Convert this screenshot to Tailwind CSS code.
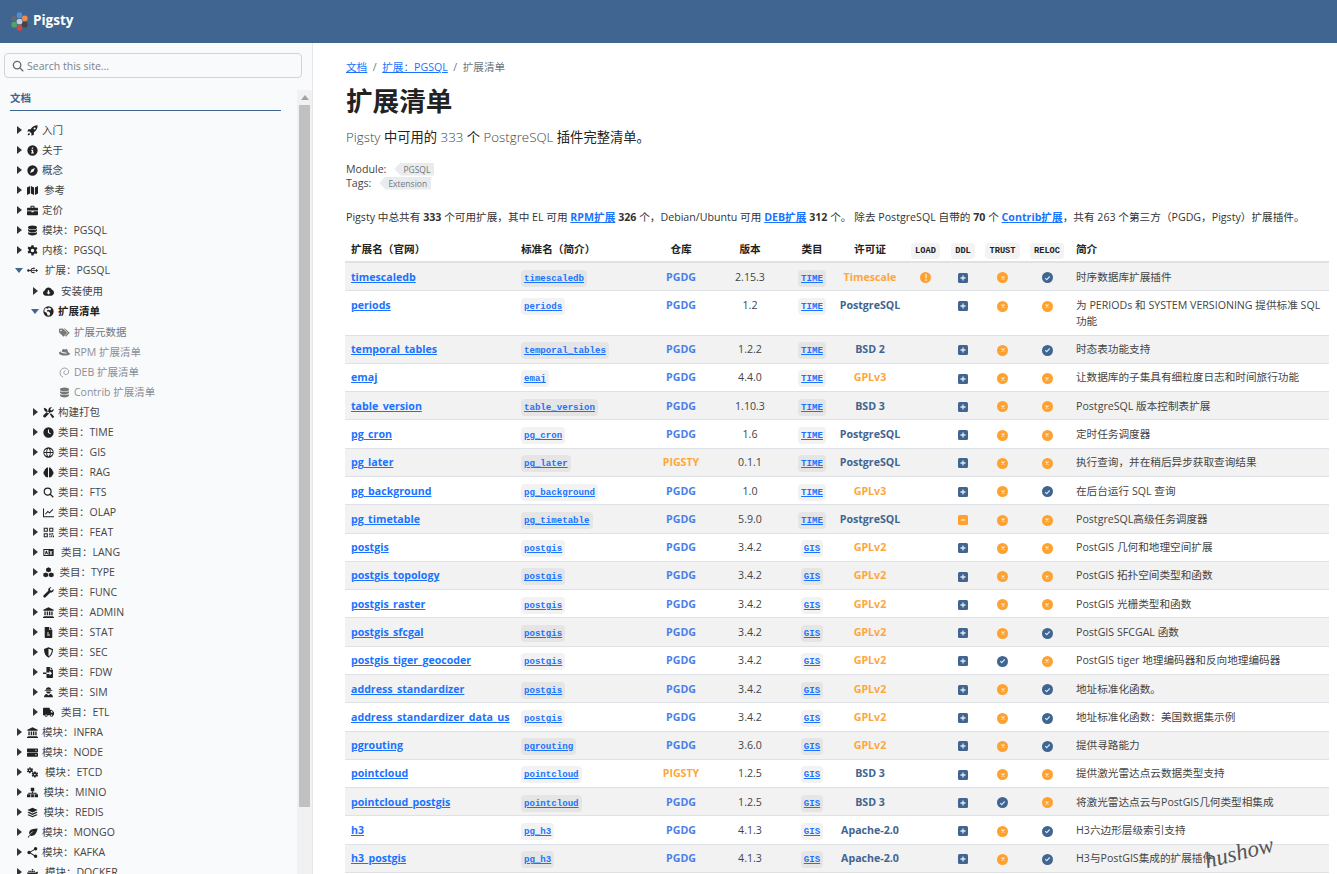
<!DOCTYPE html>
<html lang="zh">
<head>
  <meta charset="UTF-8" />
  <title>扩展清单 | Pigsty</title>
  <script src="https://cdn.jsdelivr.net/npm/@tailwindcss/browser@4"></script>
</head>
<body class="h-screen overflow-hidden bg-white text-[10.64px] leading-[16px] text-[#222] font-['Open_Sans','Noto_Sans_CJK_SC',sans-serif]">
  <header class="h-[43px] bg-[#3f6590] flex items-center pl-[11px]">
    <svg width="17" height="19" viewBox="0 0 16 18" class="mr-[5px]">
      <circle cx="8" cy="3" r="2.700" fill="#4a90d9"/><circle cx="13" cy="6" r="2.700" fill="#f08a4b"/><circle cx="13" cy="12" r="2.700" fill="#444"/>
      <circle cx="8" cy="15" r="2.700" fill="#d64541"/><circle cx="3" cy="12" r="2.700" fill="#4fa36b"/><circle cx="3" cy="6" r="2.700" fill="#5b6b7a"/><circle cx="8" cy="9" r="2.700" fill="#c9ccd0"/>
    </svg>
    <span class="text-white font-bold text-[13.500px] -mt-[3px]">Pigsty</span>
  </header>

  <div class="flex h-[831px]">
    <aside class="w-[313px] shrink-0 bg-[#f9fafc] border-r border-[#e4e6ea] flex flex-col overflow-hidden text-[10.500px]">
      <div class="pt-[10px] pl-[4px] pr-[10px] pb-[12px]">
        <div class="h-[25px] border border-[#ced4da] rounded-[4px] flex items-center pl-[7px] gap-[3px] text-[10.500px] text-[#7b8188]">
          <svg width="12" height="12" viewBox="0 0 16 16" fill="none" stroke="#5f666d" stroke-width="1.700"><circle cx="6.800" cy="6.800" r="5"/><path d="M10.500 10.500L15 15"/></svg>
          <span>Search this site...</span>
        </div>
      </div>
      <div class="flex flex-1 min-h-0">
        <nav class="w-[297px] overflow-hidden pl-[10px] pr-[16px]">
          <div class="h-[21px] border-b border-[#3f6590] font-bold text-[#3f6590] leading-[16px]">文档</div>
          <ul id="tree" class="pt-[9px] -ml-[10px] -mr-[16px] text-[#444]"></ul>
        </nav>
        <div class="w-[15px] bg-[#f1f1f1] flex flex-col items-center">
          <div class="mt-[5px] mb-[5px] w-0 h-0 border-x-[4px] border-x-transparent border-b-[5px] border-b-[#a3a3a3]"></div>
          <div class="w-[11px] h-[702px] bg-[#c1c1c1]"></div>
        </div>
      </div>
    </aside>

    <main class="flex-1 min-w-0 pl-[33px] pr-[7px] pt-[16px] overflow-hidden">
      <div class="text-[10.640px] text-[#6c757d] h-[16px] flex gap-[5.500px]">
        <a class="text-[#1a73ff] underline">文档</a><span>/</span><a class="text-[#1a73ff] underline">扩展：PGSQL</a><span>/</span><span>扩展清单</span>
      </div>
      <h1 class="mt-[8px] text-[26.600px] leading-[36px] font-bold text-[#222]">扩展清单</h1>
      <p class="mt-[8px] text-[13.300px] leading-[20px] font-light text-[#444]">Pigsty <span class="font-normal text-[#222]">中可用的</span> 333 <span class="font-normal text-[#222]">个</span> PostgreSQL <span class="font-normal text-[#222]">插件完整清单。</span></p>
      <div class="mt-[15px] leading-[14px] text-[#444]">
        <div class="flex items-center h-[14px]">Module:<span class="ml-[8px] h-[13px] pl-[9px] pr-[4px] bg-[#e9ecef] text-[#777] text-[8.500px] leading-[13px] [clip-path:polygon(6px_0,100%_0,100%_100%,6px_100%,0_50%)]">PGSQL</span></div>
        <div class="flex items-center h-[14px]">Tags:<span class="ml-[8px] h-[13px] pl-[9px] pr-[4px] bg-[#e9ecef] text-[#777] text-[8.500px] leading-[13px] [clip-path:polygon(6px_0,100%_0,100%_100%,6px_100%,0_50%)]">Extension</span></div>
      </div>
      <p class="mt-[19px] text-[#333] tracking-[0.01px]">Pigsty 中总共有 <b>333</b> 个可用扩展，其中 EL 可用 <a class="font-bold text-[#1a73ff] underline">RPM扩展</a> <b>326</b> 个，Debian/Ubuntu 可用 <a class="font-bold text-[#1a73ff] underline">DEB扩展</a> <b>312</b> 个。 除去 PostgreSQL 自带的 <b>70</b> 个 <a class="font-bold text-[#1a73ff] underline">Contrib扩展</a>，共有 263 个第三方（PGDG，Pigsty）扩展插件。</p>

      <table class="mt-[11px] -ml-[1px] table-fixed w-[984px] border-collapse">
        <colgroup>
          <col class="w-[170px]"/><col class="w-[137px]"/><col class="w-[58px]"/><col class="w-[80px]"/><col class="w-[44px]"/><col class="w-[72px]"/><col class="w-[39px]"/><col class="w-[36px]"/><col class="w-[43px]"/><col class="w-[46px]"/><col class="w-[259px]"/>
        </colgroup>
        <thead>
          <tr class="border-b-2 border-[#dee2e6] text-[#222] font-bold">
            <th class="px-[6px] pt-[5px] pb-[4px] text-left">扩展名（官网）</th>
            <th class="px-[6px] pt-[5px] pb-[4px] text-left">标准名（简介）</th>
            <th class="pt-[5px] pb-[4px] text-center">仓库</th>
            <th class="pt-[5px] pb-[4px] text-center">版本</th>
            <th class="pt-[5px] pb-[4px] text-center">类目</th>
            <th class="pt-[5px] pb-[4px] text-center">许可证</th>
            <th class="pt-[5px] pb-[4px] text-center"><code class="px-[4px] py-[3px] leading-none rounded-[4px] bg-[#f3f3f3] font-['Liberation_Mono',monospace] text-[8.700px]">LOAD</code></th>
            <th class="pt-[5px] pb-[4px] text-center"><code class="px-[4px] py-[3px] leading-none rounded-[4px] bg-[#f3f3f3] font-['Liberation_Mono',monospace] text-[8.700px]">DDL</code></th>
            <th class="pt-[5px] pb-[4px] text-center"><code class="px-[4px] py-[3px] leading-none rounded-[4px] bg-[#f3f3f3] font-['Liberation_Mono',monospace] text-[8.700px]">TRUST</code></th>
            <th class="pt-[5px] pb-[4px] text-center"><code class="px-[4px] py-[3px] leading-none rounded-[4px] bg-[#f3f3f3] font-['Liberation_Mono',monospace] text-[8.700px]">RELOC</code></th>
            <th class="px-[6px] pt-[5px] pb-[4px] text-left">简介</th>
          </tr>
        </thead>
        <tbody id="rows"></tbody>
      </table>
    </main>
  </div>

  <!-- watermark sits on top of the table -->
  <div class="absolute left-[1204px] top-[838px] -rotate-[14deg] text-[23px] leading-[30px] italic font-light text-[#555] font-['Liberation_Serif',serif]">hushow</div>

  <script>
    const icons = {
      rocket: '<path fill-rule="evenodd" d="M15.500.5C11 .5 7.500 2.500 5.300 6H2L.5 9.500h3.300l2.700 2.700v3.300l3.500-1.500v-3.300C13.500 8.500 15.500 5 15.500.5zM11 3.500a1.500 1.500 0 1 1 0 3 1.500 1.500 0 0 1 0-3z"/><path d="M3 11.500c-1.300.5-2 2-2 3.500 1.500 0 3-.7 3.500-2z"/>',
      info: '<path fill-rule="evenodd" d="M8 .5a7.500 7.500 0 1 1 0 15 7.500 7.500 0 0 1 0-15zM7 3.500v2h2v-2zM6 7v1.500h1v2.500H6v1.500h4V11H9V7z"/>',
      compass: '<path fill-rule="evenodd" d="M8 .5a7.500 7.500 0 1 1 0 15 7.500 7.500 0 0 1 0-15zM11.500 4.500L6.500 6.500 4.500 11.500l5-2z"/>',
      map: '<path d="M0 3.500L4.500 1.500V12.500L0 14.500zM5.700 1.500L10.200 3.500V14.500L5.700 12.500zM11.500 3.500L16 1.500V12.500L11.500 14.500z"/>',
      briefcase: '<path fill-rule="evenodd" d="M5 4V2.500C5 1.700 5.700 1 6.500 1h3c.8 0 1.500.7 1.500 1.500V4h3.500C15.300 4 16 4.700 16 5.500V8H0V5.500C0 4.700.7 4 1.500 4zM6.500 2.500V4h3V2.500zM0 9.200h6.500v1.300h3V9.200H16v4.300c0 .8-.7 1.500-1.500 1.500h-13C.7 15 0 14.300 0 13.500z"/>',
      database: '<ellipse cx="8" cy="3.500" rx="6.500" ry="2.800"/><path d="M1.500 5.700C3 7.500 13 7.500 14.500 5.700V8c0 1.500-2.900 2.800-6.500 2.800S1.500 9.500 1.500 8zM1.500 10.200C3 12 13 12 14.500 10.200v2.300c0 1.500-2.900 2.800-6.500 2.800s-6.500-1.300-6.500-2.800z"/>',
      gear: '<path fill-rule="evenodd" d="M6.500.5h3l.5 2.300 1.500.8 2.200-.8 1.500 2.600-1.700 1.600v1.800l1.700 1.600-1.500 2.600-2.200-.8-1.500.8-.5 2.300h-3L6 12.500l-1.500-.8-2.200.8L.8 9.900l1.700-1.600V6.500L.8 4.900l1.500-2.600 2.200.8L6 2.300zM8 5.500a2.500 2.500 0 1 0 0 5 2.500 2.500 0 0 0 0-5z"/>',
      usb: '<circle cx="2" cy="8" r="1.800"/><path d="M2 7.400h12v1.200H2z"/><path d="M13 5.500L16 8l-3 2.500z"/><path d="M4.500 8L7 4.500h2.500v1.200H7.700L5.800 8zM4.500 8L7 11.500h2v-1.200H7.700L5.800 8z"/><rect x="9" y="3.800" width="2.200" height="2.200"/><circle cx="10" cy="11" r="1.200"/>',
      cloud: '<path fill-rule="evenodd" d="M4 14C1.800 14 0 12.300 0 10.200 0 8.500 1 7.100 2.600 6.600 3 4 5.200 2 8 2c2.400 0 4.400 1.500 5.100 3.600C14.800 6.200 16 7.800 16 9.800 16 12.100 14.100 14 11.700 14zM7 6v3.500H5l3 3 3-3H9V6z"/>',
      globeAfrica: '<path fill-rule="evenodd" d="M8 .5a7.500 7.500 0 1 1 0 15 7.500 7.500 0 0 1 0-15zM4 3C2.500 4.200 1.800 6 2 8c1 1 2.500 1 3.500 2l1 3.500c1 .5 2 .5 3 .2l1-3-2-2.700H6L5.500 6.500 8 5.500l2.500 1L12 4c-1-1-2-1.500-3.500-1.700L7 4z"/>',
      tags: '<path fill-rule="evenodd" d="M0 2.500v5l6.500 6.500L12 8.500 5.500 2zM3 4a1.200 1.200 0 1 0 0 2.400A1.200 1.200 0 0 0 3 4z"/><path d="M7 2h1.500L15.500 8.500 10 14l-1.200-1.200 4-4.300z"/>',
      redhat: '<path d="M4 7c.5-2 1-4 2.500-4 1 0 1.200.5 2 .5S10 3 11 3c1.300 0 1.800 2 2.200 4.500C14.800 8 16 8.700 16 9.700c0 1.500-3 2.800-7.500 2.800C4 12.500 0 10.800 0 8.700 0 7.800.8 7 2.200 6.700 2 8 5 9.500 9 9.500c1.500 0 2.500-.3 2.500-.8C11.500 8 8 8 4 7z"/>',
      debian: '<path fill="none" stroke="currentColor" stroke-width="1" d="M6 14.500C3 13.500 1.500 11 1.500 8 1.500 4.500 4.500 1.500 8 1.500s6 2.500 6 5.500c0 2.500-2 4-4 4-1.800 0-3-1.300-3-2.800S8 5.500 9.500 5.500"/>',
      tools: '<path d="M1 2.500L2.500 1 6 3.500V5l3 3-1.500 1.500-3-3H3zM11.500.5c-2.300 0-4 2-3.500 4.300L1 11.500c-1 1-1 2.300-.2 3.200s2.200.8 3.200-.2l6.700-7c2.300.5 4.800-1.200 4.800-3.500 0-.5 0-1-.2-1.300L12.800 5 11 4.500 10.500 2.800 13 .7C12.500.5 12 .5 11.500.5z"/><path d="M10 10.500l1.500-1.500 4 4c.7.700.7 1.800 0 2.400s-1.700.6-2.400 0z"/>',
      clock: '<path fill-rule="evenodd" d="M8 .5a7.500 7.500 0 1 1 0 15 7.500 7.500 0 0 1 0-15zM7.200 3.500V8.400l3.300 2.300.9-1.200-2.700-1.900V3.500z"/>',
      globe: '<path fill-rule="evenodd" d="M8 .5a7.500 7.500 0 1 1 0 15 7.500 7.500 0 0 1 0-15zM1.800 7.300h3c0-1.700.3-3.200.8-4.400C3.500 3.600 2.100 5.300 1.800 7.300zM6 7.300h4c-.1-2.500-1-4.500-2-5-1 .5-1.900 2.500-2 5zM11.200 7.300h3c-.3-2-1.700-3.700-3.800-4.400.5 1.200.8 2.700.8 4.400zM1.800 8.700c.3 2 1.700 3.700 3.800 4.400-.5-1.200-.8-2.700-.8-4.400zM6 8.700c.1 2.500 1 4.500 2 5 1-.5 1.900-2.500 2-5zM11.200 8.700c0 1.700-.3 3.200-.8 4.400 2.100-.7 3.500-2.400 3.800-4.400z"/>',
      brain: '<path d="M7.300 1C5.500.5 4.500 1.500 4.200 2.700 2.700 3 2 4.300 2.300 5.500 1 6.300.5 7.500.8 8.700c-.2 1.300.5 2.300 1.500 2.800 0 1.500 1 2.500 2.200 2.700.5 1 1.700 1.300 2.800.8zM8.700 1c1.800-.5 2.800.5 3.100 1.700 1.500.3 2.200 1.600 1.900 2.800 1.300.8 1.800 2 1.500 3.200.2 1.300-.5 2.300-1.500 2.800 0 1.500-1 2.500-2.200 2.700-.5 1-1.700 1.300-2.800.8z"/>',
      search: '<path fill="none" stroke="currentColor" stroke-width="1.800" d="M6.800 1.800a5 5 0 1 0 0 10 5 5 0 0 0 0-10zM10.500 10.500L15 15"/>',
      chart: '<path d="M0 2h1.500v11.500H16V15H0z"/><path fill="none" stroke="currentColor" stroke-width="1.500" d="M3.500 10.500l3.500-4 2.500 2 5-5"/>',
      qr: '<path fill-rule="evenodd" d="M1 1h6v6H1zM2.500 2.500v3h3v-3zM9 1h6v6H9zM10.500 2.500v3h3v-3zM1 9h6v6H1zM2.500 10.500v3h3v-3z"/><path d="M9 9h2v3H9zM12 9h3v2h-3zM12 12h1.500v3H12zM9 13.500h2V15H9zM14.500 12.500H16V15h-1.500z"/>',
      lang: '<path fill-rule="evenodd" d="M.5 3h15v10H.5zM2 4.500v7h6v-7zM4.200 5.500h1.500L7.300 10.500H6l-.3-1H4.200l-.3 1H2.700zM9.500 6v1h1v3h-1v1h4v-1h-1V7h1V6z"/>',
      cubes: '<path d="M8 .5l3.500 1.500v4L8 7.500 4.500 6V2zM4 8l3.500 1.500v4L4 15 .5 13.500v-4zM12 8l3.500 1.500v4L12 15l-3.500-1.500v-4z"/>',
      wrench: '<path d="M11.500.5c-2.500 0-4.500 2.200-3.800 4.800L1 12c-.8.800-.8 2 0 2.800s2 .8 2.800 0l6.800-6.700c2.600.7 4.900-1.300 4.900-3.600 0-.5-.1-1-.3-1.500l-2.400 2.300-2.300-.6-.6-2.200L12.300.6C12 .5 11.800.5 11.500.5z"/>',
      bank: '<path d="M8 .5L15.500 4v1.500H.5V4zM2 6.500h2v5.500H2zM5.500 6.500h2v5.500h-2zM8.700 6.500h2v5.500h-2zM12 6.500h2v5.500h-2zM1 13h14v1.200H1zM0 14.700h16V16H0z"/>',
      file: '<path fill-rule="evenodd" d="M2.500 0H9v4.500h4.500v10c0 .8-.7 1.500-1.500 1.500H4c-.8 0-1.500-.7-1.500-1.500zM6 8v1.500h2.500V8zM6 11v1.500h4V11zM10 0l3.500 3.500H10z"/>',
      shield: '<path fill-rule="evenodd" d="M8 .5L14.500 3c0 5-1.500 10-6.500 12.500C3 13 1.500 8 1.500 3zM8 2.500v11c3.500-2 4.700-6 4.800-9.300z"/>',
      fileImport: '<path d="M5 0h5v4.500h4.500V14.500c0 .8-.7 1.500-1.500 1.500H6.500C5.700 16 5 15.300 5 14.500V10h4.500V12.500L13 9 9.500 5.500V8H5zM11 0l3.500 3.500H11zM0 8h5v2H0z"/>',
      user: '<path d="M8 .5c2.200 0 4 1.500 4 3.500H4C4 2 5.800.5 8 .5zM2.500 4.700h11v1.100h-11zM4.500 6.500h7C11.200 8.300 9.800 9.500 8 9.500S4.800 8.300 4.500 6.500zM1.500 15c0-2.500 1.500-4.500 4-4.800L8 12.500l2.500-2.300c2.500.3 4 2.300 4 4.800z"/>',
      truck: '<path fill-rule="evenodd" d="M0 2.500C0 1.700.7 1 1.500 1h7C9.300 1 10 1.700 10 2.500V4h2.500L16 7.500v4.500h-1.300a2.200 2.200 0 0 1-4.400 0H6.700a2.200 2.200 0 0 1-4.400 0H0zM11.500 5.500V8H14.500L12.500 5.500zM4.500 11a1 1 0 1 0 0 2 1 1 0 0 0 0-2zM12.500 11a1 1 0 1 0 0 2 1 1 0 0 0 0-2z"/>',
      server: '<path fill-rule="evenodd" d="M1 2h14c.6 0 1 .4 1 1v3.500c0 .6-.4 1-1 1H1c-.6 0-1-.4-1-1V3c0-.6.4-1 1-1zM1 8.500h14c.6 0 1 .4 1 1V13c0 .6-.4 1-1 1H1c-.6 0-1-.4-1-1V9.500c0-.6.4-1 1-1zM12 4v1.500h2V4zM12 10.500V12h2v-1.500z"/>',
      gears: '<path fill-rule="evenodd" d="M3 .5h2l.3 1.300 1.200.5 1.200-.6L9 3.100l-1 .9v1.300l1 .9-1.300 1.400-1.200-.6-1.200.5L5 9H3l-.3-1.300-1.200-.5-1.200.6L0 6.200l1-.9V4l-1-.9L1.300 1.700l1.200.6 1.200-.5zM4 3.500a1.200 1.200 0 1 0 0 2.400 1.200 1.200 0 0 0 0-2.400z"/><path fill-rule="evenodd" d="M10.500 6.500h2l.3 1.300 1.200.5 1.200-.6 1 1.700-1 .9v1.300l1 .9-1 1.700-1.200-.6-1.200.5-.3 1.300h-2l-.3-1.300-1.200-.5-1.200.6-1-1.700 1-.9V10.100l-1-.9 1-1.700 1.200.6 1.200-.5zM11.500 9.800a1.200 1.200 0 1 0 0 2.400 1.200 1.200 0 0 0 0-2.400z"/>',
      sitemap: '<path d="M5.500 1h5v5h-5zM7.200 6.500h1.600V9H7.200zM0 10.500h5v4.500H0zM6 10.500h4V15H6zM11 10.500h5V15h-5zM2 8.500h12v1.500h-1.500V9.700h-9V10H2z"/>',
      layers: '<path d="M8 1l7.500 3.500L8 8 .5 4.500zM2.500 7L8 9.500 13.500 7l2 1L8 11.500.5 8zM2.500 10.500L8 13l5.500-2.500 2 1L8 15 .5 11.500z"/>',
      leaf: '<path d="M15.500 2C9 2 5 3 3.500 6.500 2.800 8 3 9.500 3.700 10.500 5 8.500 7 7 10 6 7.500 7.500 4 10 1 15l1.300.5 1.800-3c2 1 5 .8 7.400-1.500 2.500-2.500 3-5.500 4-9z"/>',
      share: '<path d="M12.500 0a2.500 2.500 0 1 1 0 5 2.500 2.500 0 0 1 0-5zM3 5.500a2.500 2.500 0 1 1 0 5 2.500 2.500 0 0 1 0-5zM12.500 11a2.500 2.500 0 1 1 0 5 2.500 2.500 0 0 1 0-5z"/><path d="M3.500 7.200L12 2l.7 1.200L4.200 8.400zM4.200 7.600l8.500 5.200-.7 1.200L3.500 8.800z"/>',
      docker: '<path d="M0 8h13c.5-1 1.500-1.300 3-1-.5 4-3.500 7-8 7-4.500 0-7-2-8-6zM2 5.300h2v2H2zM4.500 5.300h2v2h-2zM7 5.300h2v2H7zM9.500 5.300h2v2h-2zM7 2.800h2v2H7z"/>'
    };

    const caretRight = '<svg width="5" height="8" viewBox="0 0 5 8" class="ml-[1px]"><path d="M0 0l5 4-5 4z" fill="#333"/></svg>';
    const caretDown = '<svg width="8" height="5" viewBox="0 0 8 5" class="-ml-[1px]"><path d="M0 0h8L4 5z" fill="#3f6590"/></svg>';

    // [level, icon, label, icon column width, state]
    const tree = [
      [1,'rocket','入门'],[1,'info','关于'],[1,'compass','概念'],[1,'map','参考',17],[1,'briefcase','定价'],
      [1,'database','模块：PGSQL'],[1,'gear','内核：PGSQL'],[1,'usb','扩展：PGSQL',18,'open'],
      [2,'cloud','安装使用',18,'first'],[2,'globeAfrica','扩展清单',15,'active'],
      [3,'tags','扩展元数据',15,'g1'],[3,'redhat','RPM 扩展清单',15,'g2'],[3,'debian','DEB 扩展清单',15,'g2'],[3,'database','Contrib 扩展清单',15,'g2'],
      [2,'tools','构建打包'],[2,'clock','类目：TIME'],[2,'globe','类目：GIS'],[2,'brain','类目：RAG'],[2,'search','类目：FTS'],[2,'chart','类目：OLAP'],
      [2,'qr','类目：FEAT'],[2,'lang','类目：LANG',18],[2,'cubes','类目：TYPE',16],[2,'wrench','类目：FUNC'],[2,'bank','类目：ADMIN'],[2,'file','类目：STAT'],
      [2,'shield','类目：SEC'],[2,'fileImport','类目：FDW'],[2,'user','类目：SIM'],[2,'truck','类目：ETL',18],
      [1,'bank','模块：INFRA'],[1,'server','模块：NODE'],[1,'gears','模块：ETCD',18],[1,'sitemap','模块：MINIO',16],[1,'layers','模块：REDIS',16],
      [1,'leaf','模块：MONGO'],[1,'share','模块：KAFKA'],[1,'docker','模块：DOCKER',18]
    ];
    const widths = { 15:'w-[15px]', 16:'w-[16.500px]', 17:'w-[17px]', 18:'w-[18px]' };

    document.getElementById('tree').innerHTML = tree.map(([level, icon, label, w = 15, state]) => {
      const pad = level === 1 ? 'pl-[16px]' : level === 2 ? 'pl-[32px]' : 'pl-[59px]';
      const tone = state === 'active' ? 'font-bold text-[#222]' : state === 'g1' ? 'mt-[1px] text-[#777]' : state === 'g2' ? 'text-[#8a8f95]' : state === 'first' ? 'mt-[1px]' : '';
      const iconTone = state === 'g1' || state === 'g2' ? 'text-[#777]' : 'text-[#222]';
      const caret = level === 3 ? '' : '<span class="w-[11px] shrink-0 flex items-center">' + (state === 'open' || state === 'active' ? caretDown : caretRight) + '</span>';
      return '<li class="h-[20px] flex items-center whitespace-nowrap ' + pad + ' ' + tone + '">' + caret +
        '<span class="shrink-0 flex items-center ' + widths[w] + ' ' + iconTone + '"><svg width="11" height="11" viewBox="0 0 16 16" fill="currentColor">' + icons[icon] + '</svg></span>' +
        '<span>' + label + '</span></li>';
    }).join('');

    const okX = '<span class="inline-flex align-middle w-[11px] h-[11px] rounded-full bg-[#ffa12e] items-center justify-center"><svg width="6" height="6" viewBox="0 0 6 6"><path d="M1.500 1.500l3 3M4.500 1.500l-3 3" stroke="#ffe8cc" stroke-width="1.100"/></svg></span>';
    const okV = '<span class="inline-flex align-middle w-[11px] h-[11px] rounded-full bg-[#3f6590] items-center justify-center"><svg width="7" height="6" viewBox="0 0 7 6" fill="none"><path d="M1.200 3.200l1.500 1.500 3-3.200" stroke="#dfe7f0" stroke-width="1.100"/></svg></span>';
    const warn = '<span class="inline-flex align-middle w-[11px] h-[11px] rounded-full bg-[#ffa12e] items-center justify-center"><svg width="2" height="7" viewBox="0 0 2 7"><path d="M.3 0h1.400v4.300H.3zM.3 5.300h1.400V7H.3z" fill="#ffe8cc"/></svg></span>';
    const plus = '<span class="inline-flex align-middle w-[10px] h-[10px] rounded-[1.500px] bg-[#3f6590] items-center justify-center"><svg width="6" height="6" viewBox="0 0 6 6"><path d="M3 .5v5M.5 3h5" stroke="#e3eaf2" stroke-width="1.300"/></svg></span>';
    const minus = '<span class="inline-flex align-middle w-[10px] h-[10px] rounded-[1.500px] bg-[#ffa12e] items-center justify-center"><svg width="6" height="6" viewBox="0 0 6 6"><path d="M.8 3h4.400" stroke="#ffe8cc" stroke-width="1.300"/></svg></span>';

    // name, code, repo, version, category, license, load, ddl, trust, reloc, description
    const rows = [
      ['timescaledb','timescaledb','PGDG','2.15.3','TIME','Timescale',warn,plus,okX,okV,'时序数据库扩展插件'],
      ['periods','periods','PGDG','1.2','TIME','PostgreSQL','',plus,okX,okX,'为 PERIODs 和 SYSTEM VERSIONING 提供标准 SQL 功能'],
      ['temporal_tables','temporal_tables','PGDG','1.2.2','TIME','BSD 2','',plus,okX,okV,'时态表功能支持'],
      ['emaj','emaj','PGDG','4.4.0','TIME','GPLv3','',plus,okX,okX,'让数据库的子集具有细粒度日志和时间旅行功能'],
      ['table_version','table_version','PGDG','1.10.3','TIME','BSD 3','',plus,okX,okX,'PostgreSQL 版本控制表扩展'],
      ['pg_cron','pg_cron','PGDG','1.6','TIME','PostgreSQL','',plus,okX,okX,'定时任务调度器'],
      ['pg_later','pg_later','PIGSTY','0.1.1','TIME','PostgreSQL','',plus,okX,okX,'执行查询，并在稍后异步获取查询结果'],
      ['pg_background','pg_background','PGDG','1.0','TIME','GPLv3','',plus,okX,okV,'在后台运行 SQL 查询'],
      ['pg_timetable','pg_timetable','PGDG','5.9.0','TIME','PostgreSQL','',minus,okX,okX,'PostgreSQL高级任务调度器'],
      ['postgis','postgis','PGDG','3.4.2','GIS','GPLv2','',plus,okX,okX,'PostGIS 几何和地理空间扩展'],
      ['postgis_topology','postgis','PGDG','3.4.2','GIS','GPLv2','',plus,okX,okX,'PostGIS 拓扑空间类型和函数'],
      ['postgis_raster','postgis','PGDG','3.4.2','GIS','GPLv2','',plus,okX,okX,'PostGIS 光栅类型和函数'],
      ['postgis_sfcgal','postgis','PGDG','3.4.2','GIS','GPLv2','',plus,okX,okV,'PostGIS SFCGAL 函数'],
      ['postgis_tiger_geocoder','postgis','PGDG','3.4.2','GIS','GPLv2','',plus,okV,okX,'PostGIS tiger 地理编码器和反向地理编码器'],
      ['address_standardizer','postgis','PGDG','3.4.2','GIS','GPLv2','',plus,okX,okV,'地址标准化函数。'],
      ['address_standardizer_data_us','postgis','PGDG','3.4.2','GIS','GPLv2','',plus,okX,okV,'地址标准化函数：美国数据集示例'],
      ['pgrouting','pgrouting','PGDG','3.6.0','GIS','GPLv2','',plus,okX,okV,'提供寻路能力'],
      ['pointcloud','pointcloud','PIGSTY','1.2.5','GIS','BSD 3','',plus,okX,okX,'提供激光雷达点云数据类型支持'],
      ['pointcloud_postgis','pointcloud','PGDG','1.2.5','GIS','BSD 3','',plus,okV,okX,'将激光雷达点云与PostGIS几何类型相集成'],
      ['h3','pg_h3','PGDG','4.1.3','GIS','Apache-2.0','',plus,okX,okV,'H3六边形层级索引支持'],
      ['h3_postgis','pg_h3','PGDG','4.1.3','GIS','Apache-2.0','',plus,okX,okV,'H3与PostGIS集成的扩展插件']
    ];

    const chip = t => '<code class="px-[3px] py-[3px] leading-none rounded-[4px] bg-black/5 font-[\'Liberation_Mono\',monospace] text-[9.100px] font-bold text-[#1a73ff] underline">' + t + '</code>';
    const orangeLicense = ['Timescale', 'GPLv3', 'GPLv2'];

    document.getElementById('rows').innerHTML = rows.map((r, i) => {
      const cell = 'py-[5.650px] leading-[16px] align-top text-center';
      return '<tr class="border-b border-[#dee2e6] ' + (i % 2 === 0 ? 'bg-[#f2f2f2]' : 'bg-white') + '">' +
        '<td class="px-[6px] py-[5.650px] align-top whitespace-nowrap font-bold text-[#1a73ff] underline">' + r[0] + '</td>' +
        '<td class="px-[6px] py-[5.650px] align-top">' + chip(r[1]) + '</td>' +
        '<td class="' + cell + ' font-bold ' + (r[2] === 'PIGSTY' ? 'text-[#ffa63a]' : 'text-[#4a7fe8]') + '">' + r[2] + '</td>' +
        '<td class="' + cell + ' text-[#444]">' + r[3] + '</td>' +
        '<td class="' + cell + '">' + chip(r[4]) + '</td>' +
        '<td class="' + cell + ' whitespace-nowrap font-bold ' + (orangeLicense.includes(r[5]) ? 'text-[#ffa63a]' : 'text-[#3f6590]') + '">' + r[5] + '</td>' +
        '<td class="' + cell + '">' + r[6] + '</td><td class="' + cell + '">' + r[7] + '</td><td class="' + cell + '">' + r[8] + '</td><td class="' + cell + '">' + r[9] + '</td>' +
        '<td class="px-[6px] py-[5.650px] align-top text-[#444]">' + r[10] + '</td></tr>';
    }).join('');
  </script>
</body>
</html>
